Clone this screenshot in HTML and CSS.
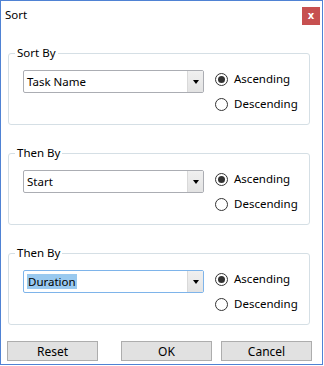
FILE: index.html
```html
<!DOCTYPE html>
<html>
<head>
<meta charset="utf-8">
<link rel="stylesheet" href="styles.css">
</head>
<body>
<div class="window">
  <div class="titlebar">
    <span class="title">Sort</span>
    <span class="close">x</span>
  </div>
  <div class="groups">
    <div class="group">
      <span class="legend">Sort By</span>
      <div class="combo"><span class="combo-text">Task Name</span><span class="combo-btn"><span class="arrow"></span></span></div>
      <div class="radios">
        <label class="radio"><span class="dot checked"></span>Ascending</label>
        <label class="radio"><span class="dot"></span>Descending</label>
      </div>
    </div>
    <div class="group">
      <span class="legend">Then By</span>
      <div class="combo"><span class="combo-text">Start</span><span class="combo-btn"><span class="arrow"></span></span></div>
      <div class="radios">
        <label class="radio"><span class="dot checked"></span>Ascending</label>
        <label class="radio"><span class="dot"></span>Descending</label>
      </div>
    </div>
    <div class="group">
      <span class="legend">Then By</span>
      <div class="combo focused"><span class="combo-text"><span class="sel">Duration</span></span><span class="combo-btn"><span class="arrow"></span></span></div>
      <div class="radios">
        <label class="radio"><span class="dot checked"></span>Ascending</label>
        <label class="radio"><span class="dot"></span>Descending</label>
      </div>
    </div>
  </div>
  <div class="buttons">
    <button class="btn reset">Reset</button>
    <button class="btn">OK</button>
    <button class="btn">Cancel</button>
  </div>
</div>
</body>
</html>
```
FILE: styles.css
```css
* { box-sizing: border-box; }
html, body { margin: 0; padding: 0; background: #fff; }
body {
  font-family: "Noto Sans", "Open Sans", sans-serif;
  font-size: 11.5px;
  color: #000;
}
.window {
  width: 323px;
  height: 365px;
  border: 1px solid #4f82d4;
  background: #fff;
  display: flex;
  flex-direction: column;
}
.titlebar {
  display: flex;
  justify-content: space-between;
  align-items: flex-start;
  padding: 6px 2px 0 4px;
  height: 52px;
}
.title {
  line-height: 16px;
  margin-top: 0;
}
.close {
  width: 18px;
  height: 18px;
  background: #c75050;
  color: #fff;
  font-weight: bold;
  font-size: 10px;
  line-height: 17px;
  text-align: center;
  font-family: "DejaVu Sans", sans-serif;
}
.groups {
  display: flex;
  flex-direction: column;
  gap: 28px;
  padding: 0 12px 0 7px;
}
.group {
  position: relative;
  height: 72px;
  border: 1px solid #d5dfe5;
  border-radius: 3px;
  display: flex;
  align-items: flex-start;
  padding: 16px 0 0 14px;
}
.legend {
  position: absolute;
  top: -9px;
  left: 6px;
  padding: 0 2px;
  background: #fff;
  line-height: 16px;
}
.combo {
  width: 181px;
  height: 23px;
  border: 1px solid #abadb3;
  border-radius: 2px;
  display: flex;
  background: #fff;
}
.combo.focused { border-color: #7eb4ea; }
.combo-text {
  flex: 1;
  padding-left: 3px;
  line-height: 21px;
}
.sel {
  background: #99c9ef;
  padding: 0 1px;
}
.combo-btn {
  width: 16px;
  background: linear-gradient(#f0f0f0, #e3e3e3);
  border-left: 1px solid #d9d9d9;
  display: flex;
  align-items: center;
  justify-content: center;
}
.arrow {
  width: 0;
  height: 0;
  border-left: 3.5px solid transparent;
  border-right: 3.5px solid transparent;
  border-top: 4px solid #000;
}
.radios {
  display: flex;
  flex-direction: column;
  gap: 9px;
  margin-left: 11px;
  margin-top: 1px;
}
.radio {
  display: flex;
  align-items: center;
  gap: 6px;
  line-height: 16px;
}
.dot {
  width: 13px;
  height: 13px;
  border: 1px solid #333;
  border-radius: 50%;
  display: flex;
  align-items: center;
  justify-content: center;
}
.dot.checked::after {
  content: "";
  width: 7px;
  height: 7px;
  border-radius: 50%;
  background: #333;
}
.buttons {
  display: flex;
  padding: 0 10px 0 6px;
  margin-top: 16px;
}
.btn {
  width: 91px;
  height: 20px;
  background: #e1e1e1;
  border: 1px solid #adadad;
  font-family: inherit;
  font-size: 12px;
  padding: 0;
  line-height: 17px;
  color: #000;
}
.btn.reset { margin-right: 23px; }
.buttons .btn:nth-child(3) { margin-left: 9px; }
```
